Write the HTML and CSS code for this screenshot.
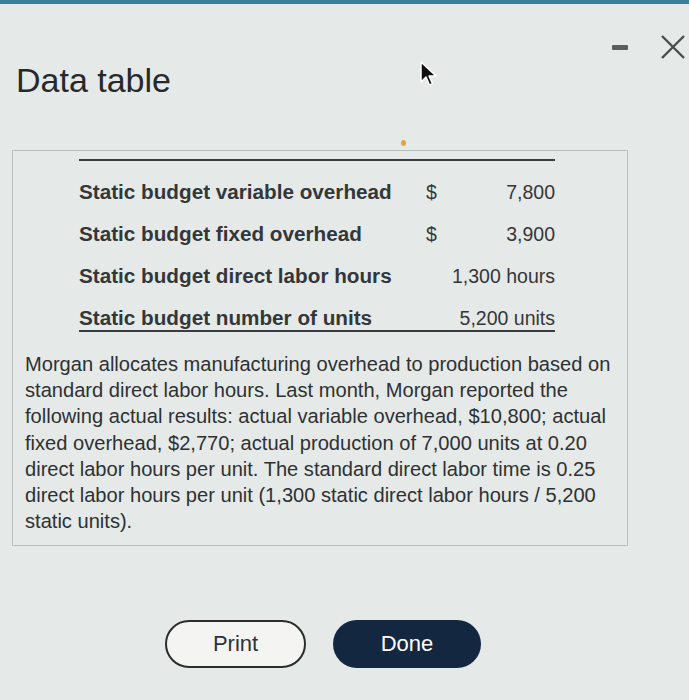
FILE: index.html
```html
<!DOCTYPE html>
<html>
<head>
<meta charset="utf-8">
<link rel="stylesheet" href="styles.css">
</head>
<body>
<div class="topbar"></div>
<div class="header">
  <h1 class="title">Data table</h1>
  <div class="controls">
    <span class="minimize"></span>
    <svg class="close" width="26" height="24" viewBox="0 0 26 24"><path d="M2 1 L24 23 M24 1 L2 23" stroke="#4a4d4f" stroke-width="2.4" fill="none"/></svg>
  </div>
</div>
<div class="panel">
  <table class="data">
    <tr><td class="label">Static budget variable overhead</td><td class="cur">$</td><td class="num">7,800</td></tr>
    <tr><td class="label">Static budget fixed overhead</td><td class="cur">$</td><td class="num">3,900</td></tr>
    <tr><td class="label">Static budget direct labor hours</td><td class="cur"></td><td class="num">1,300 hours</td></tr>
    <tr><td class="label">Static budget number of units</td><td class="cur"></td><td class="num">5,200 units</td></tr>
  </table>
  <p class="desc">Morgan allocates manufacturing overhead to production based on standard direct labor hours. Last month, Morgan reported the following actual results: actual variable overhead, $10,800; actual fixed overhead, $2,770; actual production of 7,000 units at 0.20 direct labor hours per unit. The standard direct labor time is 0.25 direct labor hours per unit (1,300 static direct labor hours / 5,200 static units).</p>
</div>
<div class="actions">
  <button class="btn print">Print</button>
  <button class="btn done">Done</button>
</div>
<svg class="cursor" width="20" height="28" viewBox="0 0 20 28"><path d="M2 2 L2 22 L7 17 L10.5 25 L13.5 23.6 L10 16 L17 16 Z" fill="#111" stroke="#fff" stroke-width="1.5" stroke-linejoin="round"/></svg>
<span class="dot"></span>
</body>
</html>
```
FILE: styles.css
```css
html, body {
  margin: 0;
  padding: 0;
}
body {
  width: 689px;
  height: 700px;
  overflow: hidden;
  background: #e5e9e7;
  font-family: "Liberation Sans", Arial, sans-serif;
  color: #2e3133;
  position: relative;
}
.topbar {
  height: 4px;
  background: #3b7f9c;
}
.header {
  display: flex;
  justify-content: space-between;
  align-items: flex-start;
  padding: 56px 3px 0 16px;
  height: 90px;
  box-sizing: border-box;
}
.title {
  margin: 0;
  font-size: 34px;
  font-weight: normal;
  line-height: 40px;
  color: #26292b;
}
.controls {
  display: flex;
  align-items: center;
  gap: 32px;
  margin-top: -25px;
}
.minimize {
  display: block;
  width: 16px;
  height: 5px;
  background: #5a5e60;
  border-radius: 1px;
}
.panel {
  margin: 56px 0 0 12px;
  width: 616px;
  border: 1px solid #b9bdbc;
  box-sizing: border-box;
  padding: 8px 0 10px 0;
  height: 396px;
}
.data {
  border-collapse: collapse;
  margin-left: 66px;
  width: 476px;
  border-top: 2px solid #3a3d40;
  border-bottom: 2px solid #3a3d40;
}
.data td {
  height: 24px;
  padding: 9px 0;
  font-size: 20.7px;
  line-height: 24px;
  color: #34373a;
  white-space: nowrap;
}
.data tr:first-child td {
  padding-top: 19px;
}
.data tr:last-child td {
  padding-bottom: 0;
}
.label {
  font-weight: bold;
  width: 356px;
}
.cur {
  width: 30px;
  font-size: 19.5px !important;
}
.num {
  text-align: right;
  font-size: 19.5px !important;
}
.desc {
  margin: 19px 0 0 12px;
  font-size: 20.1px;
  line-height: 26.2px;
  color: #2e3133;
}
.actions {
  display: flex;
  gap: 27px;
  padding-left: 165px;
  margin-top: 74px;
}
.btn {
  font-family: "Liberation Sans", Arial, sans-serif;
  font-size: 22px;
  height: 48px;
  border-radius: 24px;
  box-sizing: border-box;
  cursor: pointer;
}
.print {
  width: 141px;
  background: #f4f5f3;
  border: 2px solid #2a2c2e;
  color: #2f3234;
}
.done {
  width: 148px;
  background: #142740;
  border: none;
  color: #fff;
}
.cursor {
  position: absolute;
  left: 419px;
  top: 60px;
}
.dot {
  position: absolute;
  left: 401px;
  top: 140px;
  width: 5px;
  height: 6px;
  border-radius: 50%;
  background: #e0a63a;
}
```
